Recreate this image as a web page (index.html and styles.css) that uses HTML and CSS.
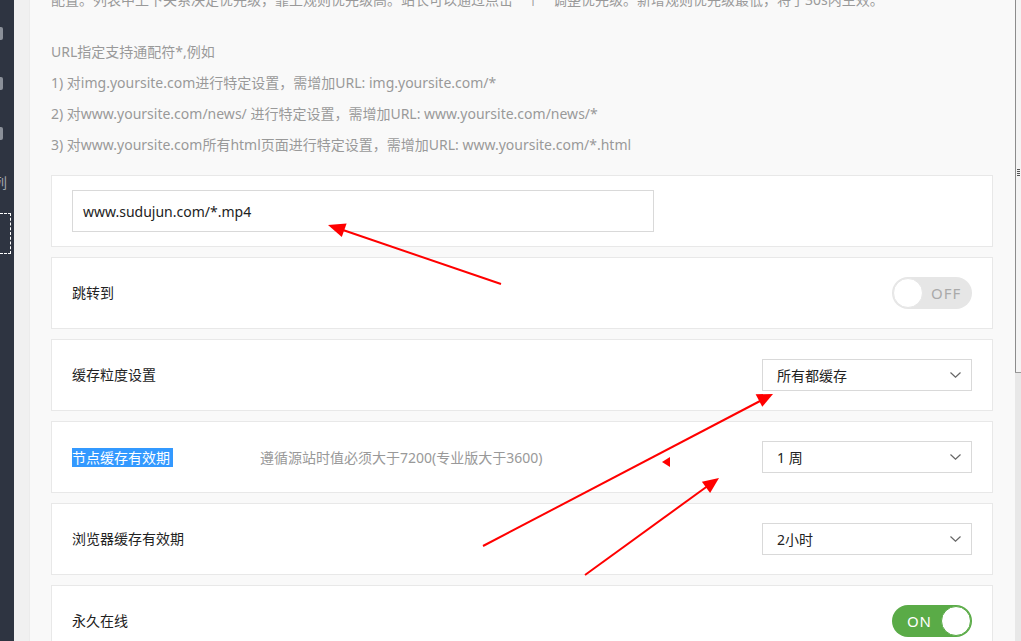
FILE: index.html
```html
<!DOCTYPE html>
<html lang="zh-CN">
<head>
<meta charset="utf-8">
<title>缓存规则</title>
<link rel="stylesheet" href="styles.css">
</head>
<body>
<div class="app">
  <aside class="sidebar">
    <span class="side-icon"></span>
    <span class="side-icon"></span>
    <span class="side-icon"></span>
    <span class="side-text">列</span>
    <span class="side-focus"></span>
  </aside>
  <div class="gutter"></div>
  <main class="main">
    <p class="intro">配置。列表中上下关系决定优先级，靠上规则优先级高。站长可以通过点击 " ↑ " 调整优先级。新增规则优先级最低，将于30s内生效。</p>
    <div class="tips">
      <p>URL指定支持通配符*,例如</p>
      <p>1) 对img.yoursite.com进行特定设置，需增加URL: img.yoursite.com/*</p>
      <p>2) 对www.yoursite.com/news/ 进行特定设置，需增加URL: www.yoursite.com/news/*</p>
      <p>3) 对www.yoursite.com所有html页面进行特定设置，需增加URL: www.yoursite.com/*.html</p>
    </div>

    <div class="card card-input">
      <div class="text-input">www.sudujun.com/*.mp4</div>
    </div>

    <div class="card">
      <span class="label">跳转到</span>
      <span class="switch off"><span class="knob"></span><span class="switch-text">OFF</span></span>
    </div>

    <div class="card">
      <span class="label">缓存粒度设置</span>
      <span class="select"><span>所有都缓存</span><svg class="chev" width="11" height="6" viewBox="0 0 11 6"><path d="M0.5 0.5 L5.5 5.2 L10.5 0.5" fill="none" stroke="#666" stroke-width="1.2"/></svg></span>
    </div>

    <div class="card">
      <span class="label selected">节点缓存有效期</span>
      <span class="hint">遵循源站时值必须大于7200(专业版大于3600)</span>
      <span class="select"><span>1 周</span><svg class="chev" width="11" height="6" viewBox="0 0 11 6"><path d="M0.5 0.5 L5.5 5.2 L10.5 0.5" fill="none" stroke="#666" stroke-width="1.2"/></svg></span>
    </div>

    <div class="card">
      <span class="label">浏览器缓存有效期</span>
      <span class="select"><span>2小时</span><svg class="chev" width="11" height="6" viewBox="0 0 11 6"><path d="M0.5 0.5 L5.5 5.2 L10.5 0.5" fill="none" stroke="#666" stroke-width="1.2"/></svg></span>
    </div>

    <div class="card">
      <span class="label">永久在线</span>
      <span class="switch on"><span class="switch-text">ON</span><span class="knob"></span></span>
    </div>
  </main>
  <div class="splitter">
    <div class="splitter-top"><span class="grip"></span></div>
    <div class="splitter-bottom"></div>
  </div>
</div>

<svg class="arrows" width="1021" height="641" viewBox="0 0 1021 641">
  <g stroke="#f00" stroke-width="2" fill="none">
    <line x1="501" y1="284" x2="340" y2="229"/>
    <line x1="483" y1="546" x2="762" y2="400"/>
    <line x1="585" y1="575" x2="709" y2="485"/>
  </g>
  <g fill="#f00">
    <polygon points="328,225 341.8,237 346.6,223.4"/>
    <polygon points="773,394 755.6,394.2 762.3,406.8"/>
    <polygon points="719,478 701.9,481.7 710.1,493.1"/>
    <polygon points="662,462 670,457 670,467"/>
  </g>
</svg>
</body>
</html>
```

FILE: styles.css
```css
* { box-sizing: border-box; }

html, body {
  margin: 0;
  padding: 0;
  height: 100%;
  overflow: hidden;
}

body {
  font-family: "Noto Sans", "Noto Sans CJK SC", sans-serif;
  font-size: 14px;
  color: #333;
  background: #f9f9f9;
  position: relative;
}

.app {
  display: flex;
  height: 641px;
  overflow: hidden;
}

.sidebar {
  width: 14px;
  flex: none;
  background: #2e3441;
  display: flex;
  flex-direction: column;
  align-items: flex-start;
  padding-top: 27px;
}

.side-icon {
  width: 3px;
  height: 13px;
  background: #8b9099;
  border-radius: 0 2px 2px 0;
  margin-bottom: 37px;
}

.side-text {
  margin-top: -4px;
  margin-left: -7px;
  font-size: 14px;
  line-height: 20px;
  color: #a3a7ae;
}

.side-focus {
  margin-top: 20px;
  width: 11px;
  height: 41px;
  border: 1px dashed #fff;
  border-left: none;
}

.gutter {
  width: 16px;
  flex: none;
  background: #f0f0f0;
  border-right: 1px solid #ebebeb;
}

.main {
  flex: 1;
  background: #f9f9f9;
  padding: 0 22px 0 21px;
}

.intro {
  margin: -16px 0 0;
  line-height: 31px;
  color: #999;
  white-space: nowrap;
}

.tips {
  margin: 21px 0 15px;
  color: #999;
}

.tips p {
  margin: 0;
  line-height: 31px;
  white-space: nowrap;
}

.card {
  height: 72px;
  background: #fff;
  border: 1px solid #e8e8e8;
  margin-bottom: 10px;
  display: flex;
  align-items: center;
  padding: 0 20px;
}

.card-input {
  padding: 14px 20px;
}

.text-input {
  width: 582px;
  height: 42px;
  border: 1px solid #d9d9d9;
  padding: 0 10px;
  display: flex;
  align-items: center;
  color: #222;
}

.label {
  color: #222;
  line-height: 20px;
}

.label.selected {
  background: #3399ff;
  color: #fff;
  padding-right: 3px;
  line-height: 19px;
}

.hint {
  margin-left: 87px;
  color: #999;
}

.select {
  margin-left: auto;
  width: 210px;
  height: 32px;
  border: 1px solid #d9d9d9;
  display: flex;
  align-items: center;
  justify-content: space-between;
  padding: 0 10px 0 14px;
  color: #222;
}

.chev { display: block; }

.switch {
  margin-left: auto;
  width: 80px;
  height: 32px;
  border-radius: 16px;
  display: flex;
  align-items: center;
  padding: 1px;
}

.switch.off {
  background: #e6e6e6;
}

.switch.on {
  background: #5aab47;
  justify-content: flex-end;
}

.knob {
  width: 30px;
  height: 30px;
  border-radius: 50%;
  background: #fff;
  border: 1px solid #e6e6e6;
  flex: none;
}

.switch.on .knob { border-color: #5aab47; }

.switch-text {
  font-size: 15px;
  letter-spacing: 1px;
  line-height: 20px;
}

.switch.off .switch-text {
  color: #aaa;
  margin-left: 8px;
}

.switch.on .switch-text {
  color: #fff;
  margin-right: 9px;
}

.splitter {
  width: 6px;
  flex: none;
  display: flex;
  flex-direction: column;
}

.splitter-top {
  height: 372px;
  border-left: 1px solid #8c8c8c;
  background: #f4f4f4;
  position: relative;
}

.grip {
  position: absolute;
  left: 1px;
  top: 169px;
  width: 3px;
  height: 7px;
  background: repeating-linear-gradient(#555 0 1px, transparent 1px 2px);
}

.splitter-bottom {
  flex: 1;
  background: #e8e8e8;
  border-top: 1px solid #999;
}

.arrows {
  position: absolute;
  left: 0;
  top: 0;
  pointer-events: none;
}
```
